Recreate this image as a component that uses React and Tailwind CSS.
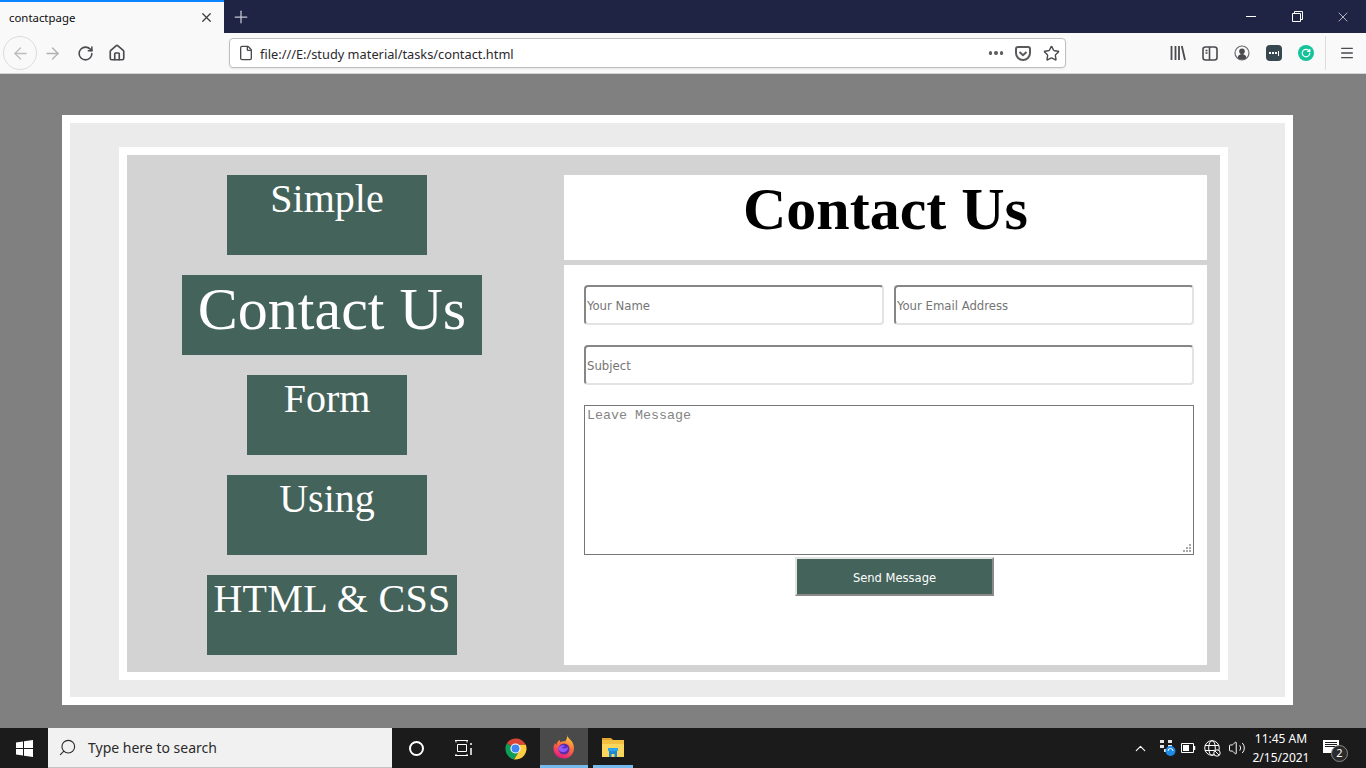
import { ArrowLeft, ArrowRight, RotateCw, Home, File, Star, Plus, X, Menu, Search, ChevronUp, Volume2 } from 'lucide-react';

const inputCls =
  'h-10 rounded border-2 border-t-[#868686] border-l-[#868686] border-r-[#e3e3e3] border-b-[#e3e3e3] bg-white px-px text-[13px] font-["DejaVu_Sans",sans-serif] [font-stretch:condensed] placeholder:text-[#757575] outline-none';

function SideBox({ text, width, offset, size }) {
  return (
    <div className={`h-20 bg-[#44635a] text-center text-white font-["Liberation_Serif",serif] leading-[48px] ${width} ${offset} ${size}`}>
      {text}
    </div>
  );
}

function FirefoxLogo() {
  return (
    <svg width="24" height="26" viewBox="0 0 24 26">
      <defs>
        <linearGradient id="fx" x1="0.7" y1="0" x2="0.3" y2="1">
          <stop offset="0" stopColor="#ffd43a" />
          <stop offset="0.45" stopColor="#ff7139" />
          <stop offset="1" stopColor="#e31587" />
        </linearGradient>
      </defs>
      <path d="M15 1c.5 3 3.500 4 5.500 7.500 2 3.500 2 8.500-.5 12-2.600 3.500-7 4.800-11 3.500C4.500 22.800 1.500 19 1.500 14.500c0-2 .5-4 1.500-5.500.300 1 .8 1.500 1.500 2 .2-2.500 1.500-4 3.500-5-.2 1 0 1.800.5 2.200C10 7.200 11.500 7 13 7.500 14.500 5.500 15.500 3.500 15 1z" fill="url(#fx)" />
      <circle cx="12" cy="15" r="5.500" fill="#5b2dae" />
      <path d="M7 13c2-2 5-2 6-1-1 1-3 1-3 2 2 1 5 0 6-1 0 3-2 5-5 5-3 0-5-2-4-5z" fill="#9059ff" />
    </svg>
  );
}

function ChromeLogo() {
  return (
    <svg width="23" height="23" viewBox="0 0 24 24">
      <path d="M12 12 L3 6.500 A11.500 11.500 0 0 1 22.800 8 L12 8z" fill="#db4437" />
      <path d="M12 12 L3 6.500 A11.500 11.500 0 0 0 10.500 23.400 L15.500 15z" fill="#0f9d58" />
      <path d="M12 8 L22.800 8 A11.500 11.500 0 0 1 10.500 23.400 L15.500 15z" fill="#ffcd40" />
      <circle cx="12" cy="12" r="5.300" fill="#fff" />
      <circle cx="12" cy="12" r="4.200" fill="#4285f4" />
    </svg>
  );
}

function FolderIcon() {
  return (
    <svg width="22" height="20" viewBox="0 0 22 20">
      <path d="M0 1h9l2 2H0z" fill="#e3a72f" />
      <rect x="0" y="3" width="22" height="5" fill="#f4c042" />
      <rect x="0" y="7" width="22" height="13" fill="#fbd65c" />
      <path d="M7 20v-6h8v6h-2.500v-3h-3v3z" fill="#1e88d8" />
      <rect x="6" y="11" width="10" height="3" fill="#2ea6ee" />
    </svg>
  );
}

function WindowsLogo() {
  return (
    <svg width="17" height="17" viewBox="0 0 17 17" fill="#fff">
      <path d="M0 2.400 7 1.400V8H0zM8 1.200 17 0v8H8zM0 9h7v6.600l-7-1zM8 9h9v8l-9-1.200z" />
    </svg>
  );
}

function Tab() {
  return (
    <div className="flex h-[33px] w-[224px] flex-col bg-[#f9f9fa]">
      <div className="h-0.5 bg-[#0a84ff]" />
      <div className="flex flex-1 items-center justify-between pl-[9px] pr-[10px] text-[11.4px] text-[#0c0c0d] font-['Noto_Sans',sans-serif]">
        <span className="pt-px">contactpage</span>
        <X size={15} strokeWidth={2} className="text-[#3d3d3f]" />
      </div>
    </div>
  );
}

function TitleBar() {
  return (
    <div className="flex h-[33px] bg-[#1f2344]">
      <Tab />
      <div className="flex w-[34px] items-center justify-center">
        <Plus size={20} strokeWidth={1.500} className="text-[#c8c9d2]" />
      </div>
      <div className="ml-auto flex items-center text-white">
        <div className="flex w-[46px] justify-center"><div className="h-px w-[10px] bg-white" /></div>
        <div className="flex w-[46px] justify-center">
          <svg width="11" height="11" viewBox="0 0 11 11" fill="none" stroke="#fff">
            <path d="M.5 2.500h8v8h-8zM2.500 2.500v-2h8v8h-2" />
          </svg>
        </div>
        <div className="flex w-[46px] justify-center"><X size={16} strokeWidth={1} /></div>
      </div>
    </div>
  );
}

function Toolbar() {
  return (
    <div className="flex h-[41px] items-center border-b border-b-[#d4d4d6] bg-[#f9f9fa] text-[#4a4a4f]">
      <div className="ml-[3px] flex h-[34px] w-[34px] items-center justify-center rounded-full border border-[#dcdcde]">
        <ArrowLeft size={19} strokeWidth={1.700} className="text-[#bcbcbe]" />
      </div>
      <ArrowRight size={19} strokeWidth={1.700} className="ml-[6px] text-[#b1b1b3]" />
      <RotateCw size={17} strokeWidth={2.200} className="ml-[15px]" />
      <Home size={18} strokeWidth={2.200} className="ml-[14px]" />
      <div className="ml-[103px] flex h-[30px] w-[837px] items-center rounded-sm border border-[#bfbfc1] bg-white pl-[8px] pr-[5px] shadow-[0_1px_2px_rgba(0,0,0,0.08)]">
        <File size={16} strokeWidth={2} />
        <span className="ml-[6px] pt-[4px] text-[12.8px] text-[#2a2a2e] font-['Noto_Sans',sans-serif]">file:///E:/study material/tasks/contact.html</span>
        <span className="ml-auto flex gap-[2px]">
          <i className="h-[3.500px] w-[3.500px] rounded-full bg-[#5a5a5e]" />
          <i className="h-[3.500px] w-[3.500px] rounded-full bg-[#5a5a5e]" />
          <i className="h-[3.500px] w-[3.500px] rounded-full bg-[#5a5a5e]" />
        </span>
        <svg className="ml-[12px]" width="16" height="15" viewBox="0 0 16 15" fill="none" stroke="#5a5a5e" strokeWidth="2">
          <path d="M1 3a2 2 0 0 1 2-2h10a2 2 0 0 1 2 2v4a7 7 0 0 1-14 0z" />
          <path d="M4.500 6 8 9.200 11.500 6" />
        </svg>
        <Star size={17} strokeWidth={2} className="ml-[12px]" />
      </div>
      <div className="ml-[104px] flex items-center">
        <svg width="16" height="16" viewBox="0 0 16 16" fill="none" stroke="#4a4a4f" strokeWidth="1.800">
          <path d="M1.500 1v14M5.500 1v14M9 1v14M11.800 1l3.200 14" />
        </svg>
        <svg className="ml-[16px]" width="16" height="15" viewBox="0 0 16 15" fill="none" stroke="#4a4a4f" strokeWidth="1.600">
          <rect x="1" y="1" width="14" height="13" rx="2.500" />
          <path d="M7.500 1v13M3.500 4.500h2M3.500 7h2" />
        </svg>
        <svg className="ml-[16px]" width="16" height="16" viewBox="0 0 16 16">
          <circle cx="8" cy="8" r="7" fill="none" stroke="#6a6a6e" strokeWidth="1.200" />
          <circle cx="8" cy="6.300" r="2.800" fill="#4a4a4f" />
          <path d="M3.500 13c.5-3 2.500-4 4.500-4s4 1 4.500 4a7 7 0 0 1-9 0z" fill="#4a4a4f" />
        </svg>
        <div className="ml-[16px] flex h-4 w-4 items-center justify-center gap-px rounded-sm bg-[#37474f]">
          <i className="h-[2px] w-[2px] bg-white" />
          <i className="h-[2px] w-[2px] bg-white" />
          <i className="h-[2px] w-[2px] bg-white" />
          <i className="h-[5px] w-px bg-white" />
        </div>
        <div className="ml-[16px] flex h-4 w-4 items-center justify-center rounded-full bg-[#15c39a]">
          <RotateCw size={10} strokeWidth={3} className="text-white" />
        </div>
        <div className="ml-[11px] h-[34px] w-px bg-[#dcdcde]" />
        <Menu size={16} strokeWidth={2} className="ml-[13px]" />
      </div>
    </div>
  );
}

function ContactPage() {
  return (
    <div className="flex-1 bg-[#808080] pl-[62px] pr-[73px] pt-[41px]">
      <div className="h-[590px] border-8 border-white bg-[#ebebeb] pl-[49px] pr-[57px] pt-[24px]">
        <div className="flex h-[533px] border-8 border-white bg-[#d3d3d3] pt-[20px] pl-0 pr-[13px]">
          <div className="flex w-[437px] flex-col items-start gap-5">
            <SideBox text="Simple" width="w-[200px]" offset="ml-[100px]" size="text-[40px]" />
            <SideBox text="Contact Us" width="w-[300px]" offset="ml-[55px]" size="text-[60px] !leading-[68px]" />
            <SideBox text="Form" width="w-[160px]" offset="ml-[120px]" size="text-[40px]" />
            <SideBox text="Using" width="w-[200px]" offset="ml-[100px]" size="text-[40px]" />
            <SideBox text="HTML & CSS" width="w-[250px]" offset="ml-[80px]" size="text-[40px] tracking-[0.3px]" />
          </div>
          <div className="flex h-[490px] flex-1 flex-col gap-[5px]">
            <div className="h-[85px] bg-white text-center text-[60px] font-bold leading-[68px] text-black font-['Liberation_Serif',serif]">
              Contact Us
            </div>
            <form className="flex-1 bg-white pl-5 pt-5">
              <div className="flex gap-[10px]">
                <input className={`w-[300px] ${inputCls}`} placeholder="Your Name" />
                <input className={`w-[300px] ${inputCls}`} placeholder="Your Email Address" />
              </div>
              <input className={`mt-5 block w-[610px] ${inputCls}`} placeholder="Subject" />
              <div className="relative mt-5 h-[150px] w-[610px]">
                <textarea
                  className="block h-full w-full resize-none border border-[#767676] bg-white px-0.5 py-0.5 text-[13.33px] leading-[15px] outline-none placeholder:text-[#858585] font-['Liberation_Mono',monospace]"
                  placeholder="Leave Message"
                />
                <svg className="absolute bottom-[3px] right-[3px]" width="8" height="8" viewBox="0 0 8 8" fill="#a8a8a8">
                  <path d="M6 0h2v2H6zM3 3h2v2H3zM6 3h2v2H6zM0 6h2v2H0zM3 6h2v2H3zM6 6h2v2H6z" />
                </svg>
              </div>
              <button
                type="button"
                className="ml-[211px] mt-0.5 block h-[39px] w-[199px] border-2 border-t-[#e3e3e3] border-l-[#e3e3e3] border-r-[#8a8a8a] border-b-[#8a8a8a] bg-[#44635a] pt-[2px] text-[12.8px] text-white font-['DejaVu_Sans',sans-serif] [font-stretch:condensed]"
              >
                Send Message
              </button>
            </form>
          </div>
        </div>
      </div>
    </div>
  );
}

function Taskbar() {
  return (
    <div className="flex h-10 items-center bg-[#1b1b1b] text-white">
      <div className="flex w-[48px] justify-center"><WindowsLogo /></div>
      <div className="flex h-10 w-[344px] items-center border-b border-[#c4c4c4] bg-[#f1f1f1] pl-[10px] text-[#2b2b2b]">
        <Search size={19} strokeWidth={1.400} className="-scale-x-100" />
        <span className="ml-[11px] text-[14px] font-['Noto_Sans',sans-serif]">Type here to search</span>
      </div>
      <div className="flex w-[48px] justify-center">
        <div className="h-[15px] w-[15px] rounded-full border-2 border-white" />
      </div>
      <div className="flex w-[46px] justify-center">
        <svg width="17" height="17" viewBox="0 0 17 17" fill="none" stroke="#fff">
          <path d="M0 .5h13M2.500 4.500h9v7h-9zM0 15.500h13M1 .5v2M12 .5v2M1 14v1M12 14v1" />
          <path d="M16 3v2M16 8v7" strokeWidth="1.500" />
        </svg>
      </div>
      <div className="flex w-[54px] justify-center pl-[4px]"><ChromeLogo /></div>
      <div className="flex h-10 w-[48px] items-center justify-center border-b-[3px] border-[#76b9ed] bg-[#4a4a4a]"><FirefoxLogo /></div>
      <div className="ml-[5px] flex h-10 w-[40px] items-center justify-center border-b-[3px] border-[#76b9ed]"><FolderIcon /></div>
      <div className="ml-auto flex items-center">
        <ChevronUp size={17} strokeWidth={1.500} />
        <svg className="ml-[10px]" width="17" height="18" viewBox="0 0 17 18">
          <path d="M1 1h4v3H1zM9 1h4v3H9zM1 6h4v3H1zM9 6h4v3H9zM5 10h4v3H5z" fill="#e6e6e6" />
          <circle cx="11.500" cy="12" r="5" fill="#1e88e5" />
          <path d="M9 12a2.500 2.500 0 0 1 5 0" stroke="#fff" fill="none" />
        </svg>
        <svg className="ml-[5px]" width="15" height="10" viewBox="0 0 15 10" fill="none" stroke="#fff">
          <path d="M.5.5h12v9H.5z" />
          <path d="M2 2h6v6H2z" fill="#fff" stroke="none" />
          <path d="M13.500 3v4" strokeWidth="1.500" />
        </svg>
        <svg className="ml-[8px]" width="17" height="17" viewBox="0 0 17 17" fill="none" stroke="#fff">
          <circle cx="8" cy="8" r="7.300" />
          <ellipse cx="8" cy="8" rx="3.300" ry="7.300" />
          <path d="M1 5.500h14M1 10.500h14" />
          <circle cx="13" cy="13" r="3.200" fill="#1b1b1b" />
          <path d="M11 11l4 4" />
        </svg>
        <Volume2 size={18} strokeWidth={1.300} className="ml-[7px]" />
        <div className="ml-[5px] w-[60px] text-center text-[12px] leading-[19px] font-['Noto_Sans',sans-serif]">
          <div>11:45 AM</div>
          <div>2/15/2021</div>
        </div>
        <div className="relative ml-[12px] mr-[17px] h-10 w-[26px]">
          <div className="absolute left-0 top-[12px] flex h-[13px] w-4 flex-col gap-px bg-white px-0.5 pt-0.5">
            <i className="h-px bg-[#1b1b1b]" />
            <i className="h-px bg-[#1b1b1b]" />
            <i className="h-px bg-[#1b1b1b]" />
          </div>
          <div className="absolute left-[8px] top-[17px] flex h-[17px] w-[17px] items-center justify-center rounded-full border border-[#8a8a8a] bg-[#2b2b2b] text-[11px] font-['Noto_Sans',sans-serif]">2</div>
        </div>
      </div>
    </div>
  );
}

export default function App() {
  return (
    <div className="flex h-screen w-[1366px] flex-col overflow-hidden">
      <TitleBar />
      <Toolbar />
      <ContactPage />
      <Taskbar />
    </div>
  );
}
